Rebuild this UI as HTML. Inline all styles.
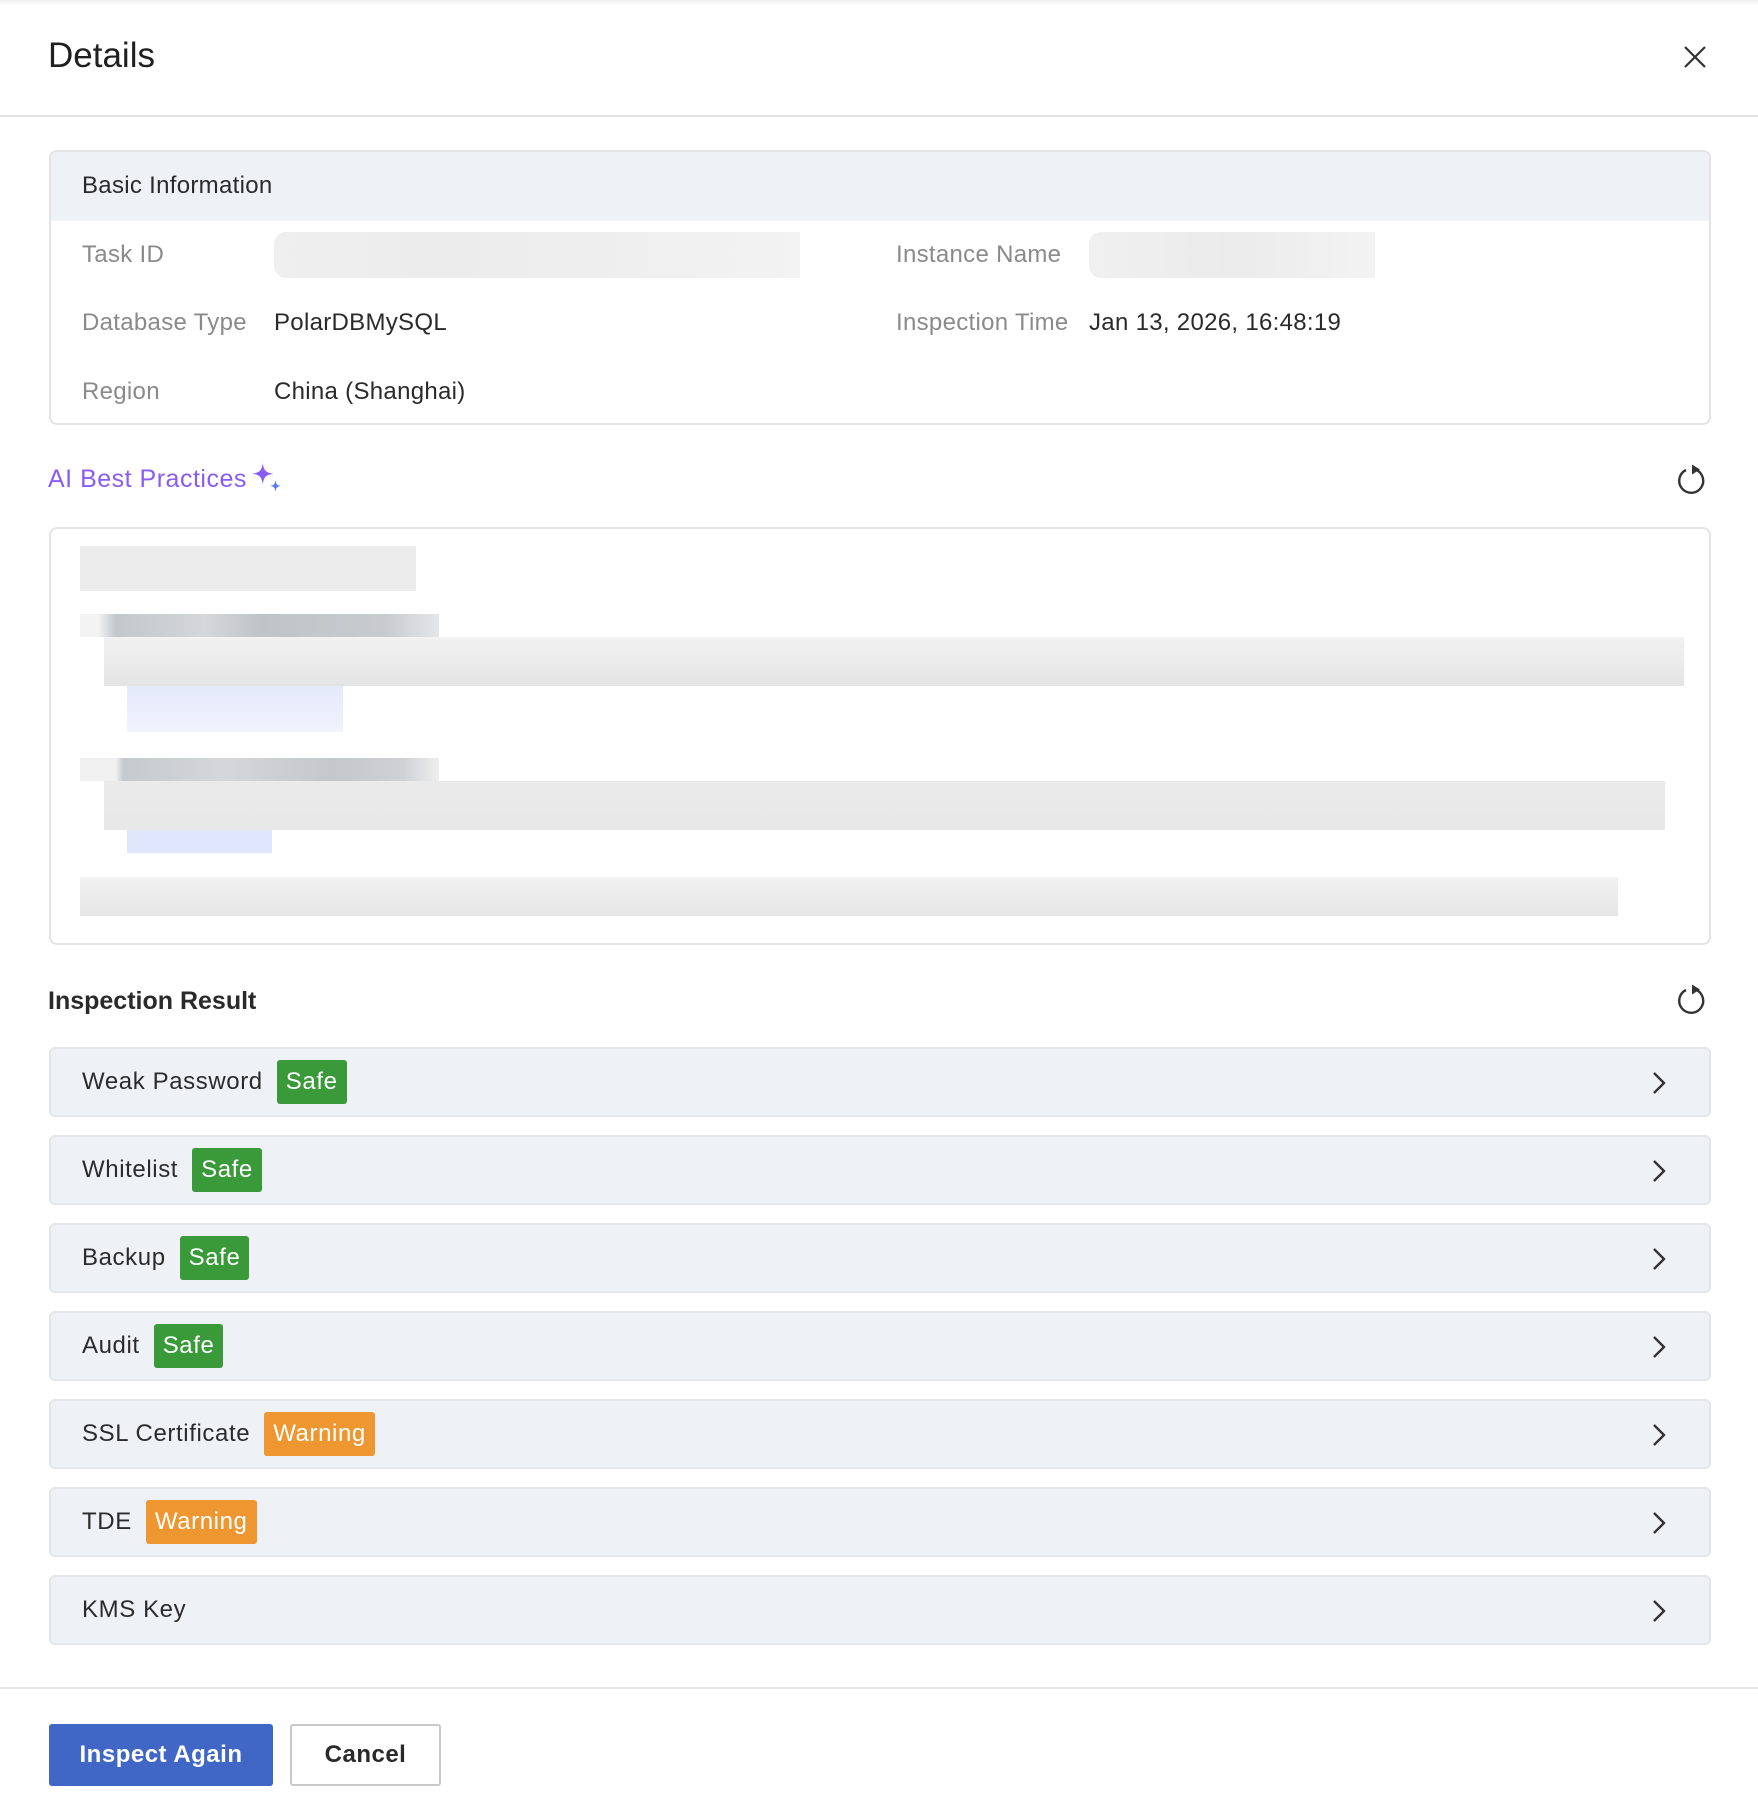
<!DOCTYPE html>
<html><head><meta charset="utf-8"><style>
*{box-sizing:border-box;margin:0;padding:0}
body{width:1758px;height:1812px;background:#fff;font-family:"Liberation Sans",sans-serif;position:relative;overflow:hidden;color:#333}
.abs{position:absolute}
.title{left:48px;top:36px;font-size:35px;color:#1f1f1f}
.hdiv{left:0;top:115px;width:1758px;height:2px;background:#e5e5e5}
.box{left:49px;width:1662px;border:2px solid #e3e3e3;border-radius:8px;overflow:hidden}
.lab{font-size:24px;letter-spacing:0.3px;color:#8a8a8a}
.val{font-size:24px;letter-spacing:0.3px;color:#2a2a2a}
.row{left:49px;width:1662px;height:70px;background:#eef2f6;border:2px solid #e3e6ea;border-radius:6px;display:flex;align-items:center}
.row .t{margin-left:31px;font-size:24px;letter-spacing:0.6px;color:#2b2b2b;display:flex;align-items:center}
.badge{display:inline-block;color:#fff;font-size:24px;padding:0 9px;height:44px;line-height:44px;border-radius:3px;margin-left:14px;letter-spacing:0.6px}
.safe{background:#3a9a3a}.warn{background:#ee9630}
.chev{position:absolute;right:42px;top:22px}
.blk{position:absolute}
</style></head><body>
<div class="abs" style="left:0;top:0;width:1758px;height:6px;background:linear-gradient(#f0f0f0,#fff)"></div>
<div class="abs title">Details</div>
<svg class="abs" style="left:1683px;top:45px" width="24" height="24" viewBox="0 0 24 24"><path d="M2 2L22 22M22 2L2 22" stroke="#333" stroke-width="2.2"/></svg>
<div class="abs hdiv"></div>

<div class="abs box" style="top:150px;height:275px">
 <div style="height:69px;background:#eef2f6;padding:20px 0 0 31px;font-size:24px;letter-spacing:0.3px;color:#2a2a2a">Basic Information</div>
</div>
<div class="abs lab" style="left:82px;top:241px">Task ID</div>
<div class="abs" style="left:274px;top:232px;width:526px;height:46px;border-radius:12px 0 0 12px;background:linear-gradient(90deg,#efefef,#ececec 30%,#eeeeee 60%,#f3f3f3)"></div>
<div class="abs lab" style="left:82px;top:309px">Database Type</div>
<div class="abs val" style="left:274px;top:309px">PolarDBMySQL</div>
<div class="abs lab" style="left:82px;top:378px">Region</div>
<div class="abs val" style="left:274px;top:378px">China (Shanghai)</div>
<div class="abs lab" style="left:896px;top:241px">Instance Name</div>
<div class="abs" style="left:1089px;top:232px;width:286px;height:46px;border-radius:12px 0 0 12px;background:linear-gradient(90deg,#f0f0f0,#ebebeb 50%,#f3f3f3)"></div>
<div class="abs lab" style="left:896px;top:309px">Inspection Time</div>
<div class="abs val" style="left:1089px;top:309px">Jan 13, 2026, 16:48:19</div>

<div class="abs" style="left:48px;top:465px;font-size:25px;letter-spacing:0.5px;color:#8a5cf6">AI Best Practices</div>
<svg class="abs" style="left:250px;top:462px" width="34" height="34" viewBox="0 0 32 32"><path d="M12 1C13 8 15 10 22 11C15 12 13 14 12 21C11 14 9 12 2 11C9 10 11 8 12 1Z" fill="#8a5cf6"/><path d="M24 17C24.6 21 25.5 22 29.5 22.5C25.5 23 24.6 24 24 28C23.4 24 22.5 23 18.5 22.5C22.5 22 23.4 21 24 17Z" fill="#5a7cf0"/></svg>
<svg class="abs" style="left:1676px;top:464px" width="32" height="32" viewBox="0 0 32 32"><path d="M20 5.8A12 12 0 1 1 10 6" fill="none" stroke="#333" stroke-width="2.4"/><path d="M16 0.5L24 5.5L16 10.5Z" fill="#333"/></svg>

<div class="abs box" style="top:527px;height:418px;background:#fff"></div>
<div class="blk" style="left:80px;top:546px;width:336px;height:45px;background:#ececec"></div>
<div class="blk" style="left:80px;top:614px;width:359px;height:23px;background:linear-gradient(90deg,#f3f3f3 5%,#c3c7cb 10%,#d5d7da 35%,#c0c4c8 50%,#c8cbce 85%,#e5e6e8)"></div>
<div class="blk" style="left:104px;top:637px;width:1580px;height:49px;background:linear-gradient(#f2f2f2,#e4e4e4)"></div>
<div class="blk" style="left:127px;top:686px;width:216px;height:46px;background:linear-gradient(#e4e9fb,#f1f3fd)"></div>
<div class="blk" style="left:80px;top:758px;width:359px;height:23px;background:linear-gradient(90deg,#f0f0f0 10%,#c6cacd 12%,#d5d7da 40%,#c4c7cb 70%,#cfd1d3 90%,#eeeeee)"></div>
<div class="blk" style="left:104px;top:781px;width:1561px;height:49px;background:linear-gradient(#eaeaea,#e8e8e8)"></div>
<div class="blk" style="left:127px;top:830px;width:145px;height:23px;background:#dfe5fb"></div>
<div class="blk" style="left:80px;top:877px;width:1538px;height:39px;background:linear-gradient(#f2f2f2,#e5e5e5)"></div>

<div class="abs" style="left:48px;top:987px;font-size:25px;font-weight:bold;color:#2a2a2a">Inspection Result</div>
<svg class="abs" style="left:1676px;top:984px" width="32" height="32" viewBox="0 0 32 32"><path d="M20 5.8A12 12 0 1 1 10 6" fill="none" stroke="#333" stroke-width="2.4"/><path d="M16 0.5L24 5.5L16 10.5Z" fill="#333"/></svg>

<div class="abs row" style="top:1047px"><div class="t">Weak Password<span class="badge safe">Safe</span></div><svg class="chev" width="16" height="24" viewBox="0 0 16 24"><path d="M3 2L13 12L3 22" fill="none" stroke="#333" stroke-width="2.4"/></svg></div>
<div class="abs row" style="top:1135px"><div class="t">Whitelist<span class="badge safe">Safe</span></div><svg class="chev" width="16" height="24" viewBox="0 0 16 24"><path d="M3 2L13 12L3 22" fill="none" stroke="#333" stroke-width="2.4"/></svg></div>
<div class="abs row" style="top:1223px"><div class="t">Backup<span class="badge safe">Safe</span></div><svg class="chev" width="16" height="24" viewBox="0 0 16 24"><path d="M3 2L13 12L3 22" fill="none" stroke="#333" stroke-width="2.4"/></svg></div>
<div class="abs row" style="top:1311px"><div class="t">Audit<span class="badge safe">Safe</span></div><svg class="chev" width="16" height="24" viewBox="0 0 16 24"><path d="M3 2L13 12L3 22" fill="none" stroke="#333" stroke-width="2.4"/></svg></div>
<div class="abs row" style="top:1399px"><div class="t">SSL Certificate<span class="badge warn">Warning</span></div><svg class="chev" width="16" height="24" viewBox="0 0 16 24"><path d="M3 2L13 12L3 22" fill="none" stroke="#333" stroke-width="2.4"/></svg></div>
<div class="abs row" style="top:1487px"><div class="t">TDE<span class="badge warn">Warning</span></div><svg class="chev" width="16" height="24" viewBox="0 0 16 24"><path d="M3 2L13 12L3 22" fill="none" stroke="#333" stroke-width="2.4"/></svg></div>
<div class="abs row" style="top:1575px"><div class="t">KMS Key</div><svg class="chev" width="16" height="24" viewBox="0 0 16 24"><path d="M3 2L13 12L3 22" fill="none" stroke="#333" stroke-width="2.4"/></svg></div>

<div class="abs" style="left:0;top:1687px;width:1758px;height:2px;background:#e5e5e5"></div>
<div class="abs" style="left:49px;top:1724px;width:224px;height:62px;background:#4066c6;border-radius:3px;color:#fff;font-size:24px;font-weight:bold;text-align:center;line-height:62px;letter-spacing:0.5px">Inspect Again</div>
<div class="abs" style="left:290px;top:1724px;width:151px;height:62px;border:2px solid #c8c8c8;border-radius:3px;color:#2a2a2a;font-size:24px;font-weight:bold;text-align:center;line-height:58px;letter-spacing:0.5px">Cancel</div>
</body></html>
